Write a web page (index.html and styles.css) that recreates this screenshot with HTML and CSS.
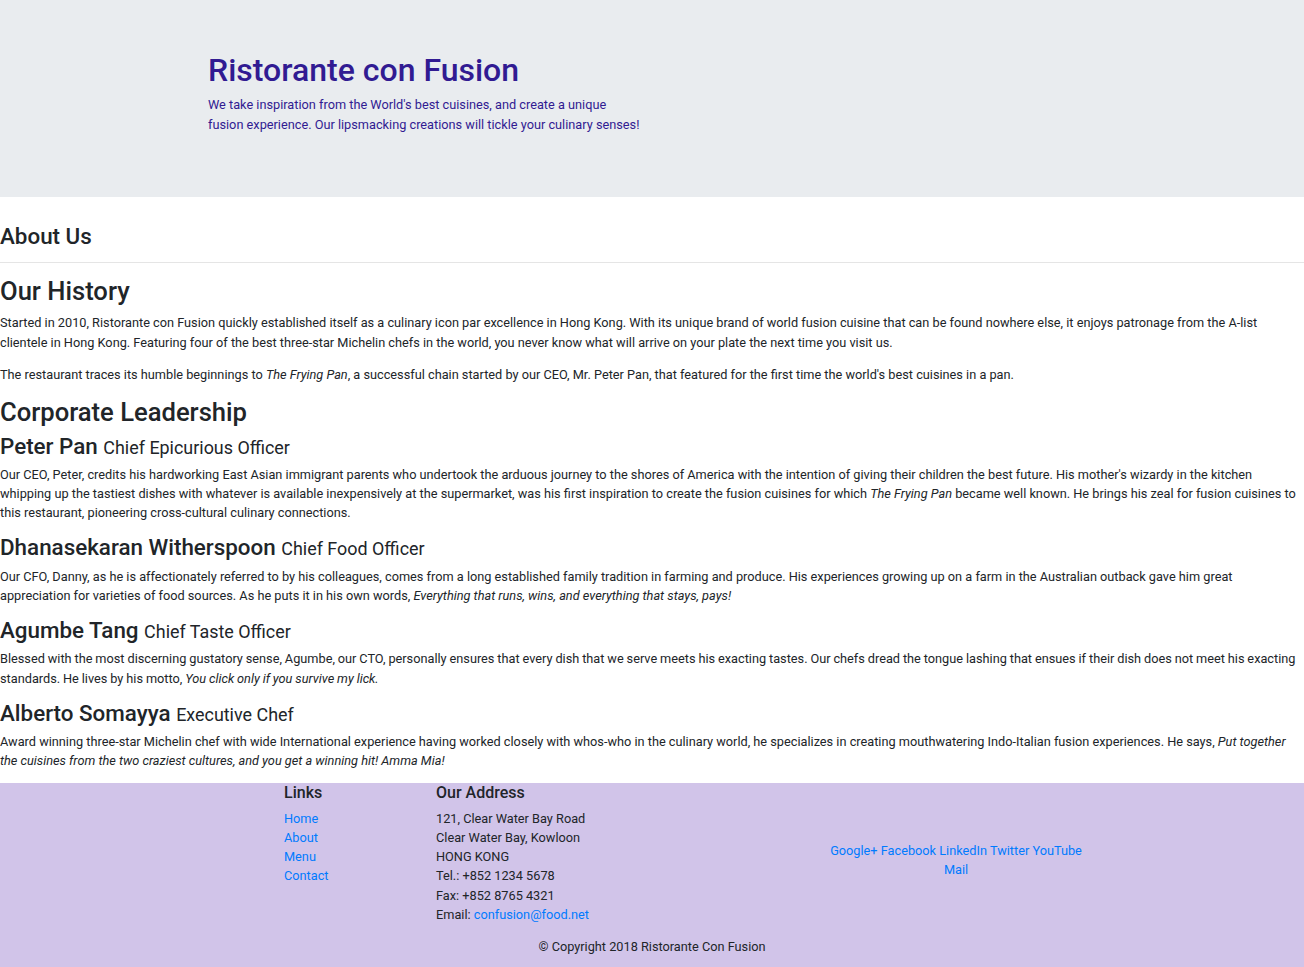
FILE: index.html
```html
<!DOCTYPE html>
<html lang="en">
<head>
<meta charset="utf-8">
<title>Ristorante con Fusion</title>
<link rel="stylesheet" href="styles.css">
</head>
<body>
<header class="jumbotron">
  <div class="container">
    <div class="row">
      <div class="col-half">
        <h1 class="brand">Ristorante con Fusion</h1>
        <p>We take inspiration from the World's best cuisines, and create a unique fusion experience. Our lipsmacking creations will tickle your culinary senses!</p>
      </div>
    </div>
  </div>
</header>

<main class="content">
  <h3 class="page-title">About Us</h3>
  <hr class="rule">

  <h2 class="h2">Our History</h2>
  <p>Started in 2010, Ristorante con Fusion quickly established itself as a culinary icon par excellence in Hong Kong. With its unique brand of world fusion cuisine that can be found nowhere else, it enjoys patronage from the A-list clientele in Hong Kong. Featuring four of the best three-star Michelin chefs in the world, you never know what will arrive on your plate the next time you visit us.</p>
  <p>The restaurant traces its humble beginnings to <em>The Frying Pan</em>, a successful chain started by our CEO, Mr. Peter Pan, that featured for the first time the world's best cuisines in a pan.</p>

  <h2 class="h2">Corporate Leadership</h2>
  <h3 class="leader">Peter Pan <small>Chief Epicurious Officer</small></h3>
  <p>Our CEO, Peter, credits his hardworking East Asian immigrant parents who undertook the arduous journey to the shores of America with the intention of giving their children the best future. His mother's wizardy in the kitchen whipping up the tastiest dishes with whatever is available inexpensively at the supermarket, was his first inspiration to create the fusion cuisines for which <em>The Frying Pan</em> became well known. He brings his zeal for fusion cuisines to this restaurant, pioneering cross-cultural culinary connections.</p>
  <h3 class="leader">Dhanasekaran Witherspoon <small>Chief Food Officer</small></h3>
  <p>Our CFO, Danny, as he is affectionately referred to by his colleagues, comes from a long established family tradition in farming and produce. His experiences growing up on a farm in the Australian outback gave him great appreciation for varieties of food sources. As he puts it in his own words, <em>Everything that runs, wins, and everything that stays, pays!</em></p>
  <h3 class="leader">Agumbe Tang <small>Chief Taste Officer</small></h3>
  <p class="tight">Blessed with the most discerning gustatory sense, Agumbe, our CTO, personally ensures that every dish that we serve meets his exacting tastes. Our chefs dread the tongue lashing that ensues if their dish does not meet his exacting standards. He lives by his motto, <em>You click only if you survive my lick.</em></p>
  <h3 class="leader">Alberto Somayya <small>Executive Chef</small></h3>
  <p>Award winning three-star Michelin chef with wide International experience having worked closely with whos-who in the culinary world, he specializes in creating mouthwatering Indo-Italian fusion experiences. He says, <em>Put together the cuisines from the two craziest cultures, and you get a winning hit! Amma Mia!</em></p>
</main>

<footer class="footer">
  <div class="container">
    <div class="row">
      <div class="col-links">
        <h5 class="h5">Links</h5>
        <ul class="link-list">
          <li><a href="#">Home</a></li>
          <li><a href="#">About</a></li>
          <li><a href="#">Menu</a></li>
          <li><a href="#">Contact</a></li>
        </ul>
      </div>
      <div class="col-address">
        <h5 class="h5">Our Address</h5>
        <address class="address">
          121, Clear Water Bay Road<br>
          Clear Water Bay, Kowloon<br>
          HONG KONG<br>
          Tel.: +852 1234 5678<br>
          Fax: +852 8765 4321<br>
          Email: <a href="#">confusion@food.net</a>
        </address>
      </div>
      <div class="col-social">
        <div class="social">
          <a href="#">Google+</a> <a href="#">Facebook</a> <a href="#">LinkedIn</a> <a href="#">Twitter</a> <a href="#">YouTube</a> <a href="#">Mail</a>
        </div>
      </div>
    </div>
    <div class="copyright-row">
      <p class="copyright">© Copyright 2018 Ristorante Con Fusion</p>
    </div>
  </div>
</footer>
</body>
</html>
```

FILE: styles.css
```css
* { box-sizing: border-box; }
html, body { margin: 0; padding: 0; }
body {
  font-family: Roboto, "Liberation Sans", Arial, sans-serif;
  font-size: 12.74px;
  line-height: 19.2px;
  color: #212529;
  background: #fff;
  overflow-x: hidden;
}
p { margin: 0 0 12.8px; }
a { color: #007bff; text-decoration: none; }
h1, h2, h3, h5 { margin: 0 0 6.4px; font-weight: 500; line-height: 1.2; }

.container { width: 912px; margin: 0 auto; padding: 0; }
.row { display: flex; }

.jumbotron {
  background: #e9ecef;
  padding: 50.6px 0;
  margin-bottom: 25.6px;
  color: #311b92;
}
.col-half { width: 460px; padding: 0 12px; }
.brand { font-size: 32px; line-height: 38.4px; }

.content { padding: 0; }
.page-title { font-size: 22.4px; line-height: 26.88px; }
.rule { border: 0; border-top: 1px solid rgba(0,0,0,.1); margin: 12.8px 0; }
.h2 { font-size: 25.6px; line-height: 30.72px; }
.leader { font-size: 22.4px; line-height: 25px; }
.leader small { font-size: 80%; font-weight: 400; line-height: 1; }
.tight { word-spacing: -0.25px; }

.footer { background: #d1c4e9; }
.h5 { font-size: 16px; line-height: 19.2px; }
.col-links { margin-left: 76px; width: 152px; padding: 0 12px; }
.col-address { width: 380px; padding: 0 12px; }
.col-social { width: 304px; padding: 0 12px; align-self: center; text-align: center; }
.social { max-width: 268px; margin: 0 auto; }
.link-list { list-style: none; margin: 0 0 12.8px; padding: 0; }
.address { font-style: normal; margin: 0 0 12.8px; }
.copyright-row { display: flex; justify-content: center; }
.copyright { margin: 0 0 12.8px; }
```
